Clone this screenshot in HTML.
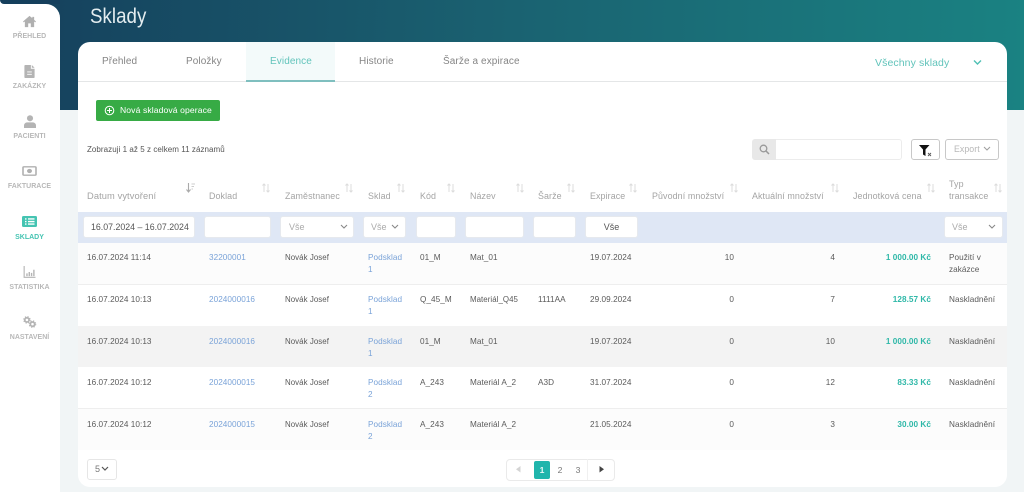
<!DOCTYPE html>
<html lang="cs">
<head>
<meta charset="utf-8">
<title>Sklady</title>
<style>
html,body{margin:0;padding:0;width:1024px;height:492px;overflow:hidden;background:#f1f5f6;font-family:"Liberation Sans",sans-serif}
#root{position:relative;width:1024px;height:492px;overflow:hidden;filter:blur(.3px)}
.a{position:absolute}
.t{position:absolute;white-space:nowrap;line-height:12px;font-size:8.2px;color:#5a5a5a;letter-spacing:.05px}
.r{text-align:right}
.l{color:#7aa3d8}
.h{color:#a4a4a4;font-size:8.9px;letter-spacing:.1px}
.g{color:#2fb8a8;font-weight:bold}
.n{position:absolute;left:0;width:59px;text-align:center;font-size:7px;font-weight:bold;color:#b8b8b8;line-height:10px;white-space:nowrap}
.tab{position:absolute;top:55px;font-size:10px;line-height:14px;color:#858585;white-space:nowrap;letter-spacing:.1px}
.i{position:absolute;top:216px;height:20px;background:#fff;border:1px solid #e6e9ee;border-radius:3px;box-sizing:content-box}
.sel{font-size:9px;line-height:20px;color:#aaa;white-space:nowrap}
.row{position:absolute;left:78px;width:929px}
svg{position:absolute;display:block}
</style>
</head>
<body>
<div id="root">
<div class="a" style="left:0;top:0;width:1024px;height:110px;background:linear-gradient(92deg,#153f5c 0%,#1a6271 50%,#1a8282 100%)"></div>
<div class="a" style="left:0;top:0;width:8px;height:8px;background:#fff"></div>
<div class="a" style="left:0;top:0;width:60px;height:4px;background:#153f5c;border-bottom-left-radius:5px"></div>
<div class="a" style="left:0;top:4px;width:60px;height:488px;background:#fff;border-radius:0 14px 0 0"></div>

<svg style="left:22px;top:15px" width="15" height="13" viewBox="0 0 15 14"><path d="M7.500 1 0.500 7l.8 1L2.500 7v6h3.600V9h2.800v4h3.600V7l1.200 1 .8-1-2-1.800V2h-2v1.400z" fill="#b0b0b0"/></svg>
<div class="n" style="top:32px">PŘEHLED</div>
<svg style="left:24px;top:65px" width="11" height="13" viewBox="0 0 11 14"><path d="M1 0h6v4h4v9a1 1 0 0 1-1 1H1a1 1 0 0 1-1-1V1a1 1 0 0 1 1-1zM8 0l3 3H8zM3 7v1h5V7zm0 2.500v1h5v-1z" fill="#b4b4b4" fill-rule="evenodd"/></svg>
<div class="n" style="top:82px">ZAKÁZKY</div>
<svg style="left:24px;top:115px" width="12" height="13" viewBox="0 0 13 14"><circle cx="6.500" cy="3.500" r="3.300" fill="#b4b4b4"/><path d="M0 14v-2.500C0 9 2 8 4 8h5c2 0 4 1 4 3.500V14z" fill="#b4b4b4"/></svg>
<div class="n" style="top:132px">PACIENTI</div>
<svg style="left:22px;top:166px" width="15" height="10" viewBox="0 0 15 12" preserveAspectRatio="none"><rect x="1" y="1" width="13" height="10" rx="1" fill="none" stroke="#b0b0b0" stroke-width="1.600"/><circle cx="7.500" cy="6" r="2.500" fill="#b0b0b0"/></svg>
<div class="n" style="top:182px">FAKTURACE</div>
<svg style="left:22px;top:216px" width="15" height="11" viewBox="0 0 15 12" preserveAspectRatio="none"><rect width="15" height="12" rx="1.500" fill="#45c4b2"/><path d="M3 2.500h1.500v1.500H3zM6 2.500h6.500v1.500H6zM3 5.300h1.500v1.500H3zM6 5.300h6.500v1.500H6zM3 8h1.500v1.500H3zM6 8h6.500v1.500H6z" fill="#fff"/></svg>
<div class="n" style="top:233px;color:#45c4b2">SKLADY</div>
<svg style="left:23px;top:266px" width="13" height="12" viewBox="0 0 13 13"><path d="M.7 0v12.300H13" fill="none" stroke="#b4b4b4" stroke-width="1.200"/><path d="M3 8h1.500v3H3zM5.500 6.500H7V11H5.500zM8 7.500h1.500V11H8zM10.500 4H12v7h-1.500z" fill="#b4b4b4"/></svg>
<div class="n" style="top:283px">STATISTIKA</div>
<svg style="left:22px;top:316px" width="15" height="12" viewBox="0 0 16 14"><circle cx="5" cy="4.500" r="2.500" fill="none" stroke="#b4b4b4" stroke-width="2"/><circle cx="5" cy="4.500" r="3.800" fill="none" stroke="#b4b4b4" stroke-width="1.200" stroke-dasharray="1.500 1.500"/><circle cx="11.500" cy="9.500" r="2.500" fill="none" stroke="#b4b4b4" stroke-width="2"/><circle cx="11.500" cy="9.500" r="3.800" fill="none" stroke="#b4b4b4" stroke-width="1.200" stroke-dasharray="1.500 1.500"/></svg>
<div class="n" style="top:333px">NASTAVENÍ</div>

<div class="t" style="left:90px;top:2px;font-size:21.500px;line-height:28px;color:#e4edf0;transform:scaleX(.87);transform-origin:0 0">Sklady</div>

<div class="a" style="left:78px;top:42px;width:929px;height:445px;background:#fff;border-radius:12px;overflow:hidden">
  <div class="a" style="left:0;top:39px;width:929px;height:1px;background:#e4e6e7"></div>
  <div class="a" style="left:168px;top:0;width:89px;height:38px;background:#f3fafa;border-bottom:2px solid #7fbfbf"></div>
</div>
<div class="tab" style="left:102px">Přehled</div>
<div class="tab" style="left:186px">Položky</div>
<div class="tab" style="left:270px;color:#62c4bb">Evidence</div>
<div class="tab" style="left:359px">Historie</div>
<div class="tab" style="left:443px">Šarže a expirace</div>
<div class="tab" style="left:875px;top:56px;color:#62c4bb;font-size:10.500px">Všechny sklady</div>
<svg style="left:973px;top:59px" width="9" height="7" viewBox="0 0 9 7"><path d="M1 1.500l3.500 3.500L8 1.500" fill="none" stroke="#4fc0b4" stroke-width="1.400"/></svg>

<div class="a" style="left:96px;top:100px;width:124px;height:21px;background:#37ab45;border-radius:2px"></div>
<svg style="left:104px;top:105px" width="11" height="11" viewBox="0 0 11 11"><circle cx="5.500" cy="5.500" r="4.300" fill="none" stroke="#fff" stroke-width="1"/><path d="M5.500 3v5M3 5.500h5" stroke="#fff" stroke-width="1"/></svg>
<div class="t" style="left:120px;top:104px;color:#fff;font-size:8.600px;letter-spacing:.1px">Nová skladová operace</div>

<div class="t" style="left:87px;top:144px;color:#555;font-size:8px">Zobrazuji 1 až 5 z celkem 11 záznamů</div>

<div class="a" style="left:752px;top:139px;width:24px;height:21px;background:#e8e8e8;border-radius:3px 0 0 3px"></div>
<div class="a" style="left:776px;top:139px;width:125px;height:19px;background:#fff;border:1px solid #ececec;border-left:0;border-radius:0 3px 3px 0"></div>
<svg style="left:759px;top:144px" width="11" height="11" viewBox="0 0 11 11"><circle cx="4.500" cy="4.500" r="3.300" fill="none" stroke="#999" stroke-width="1.300"/><path d="M7 7l3 3" stroke="#999" stroke-width="1.500"/></svg>
<div class="a" style="left:911px;top:139px;width:27px;height:19px;background:#fff;border:1px solid #c8c8c8;border-radius:3px"></div>
<svg style="left:919px;top:145px" width="15" height="12" viewBox="0 0 15 12"><path d="M0 0h10.500L6.500 4.500V11L4 9.500V4.500z" fill="#111"/><path d="M9 8l3 3M12 8l-3 3" stroke="#555" stroke-width=".9"/></svg>
<div class="a" style="left:945px;top:139px;width:52px;height:19px;background:#fff;border:1px solid #c8c8c8;border-radius:3px"></div>
<div class="t" style="left:954px;top:143px;font-size:8.800px;color:#b8b8b8">Export</div>
<svg style="left:983px;top:146px" width="8" height="6" viewBox="0 0 8 6"><path d="M1 1l3 3 3-3" fill="none" stroke="#a0a0a0" stroke-width="1.100"/></svg>

<div class="row" style="top:212px;height:31px;background:#dfe7f5"></div>
<div class="row" style="top:243px;height:41px;background:#fcfcfc;border-bottom:1px solid #eee"></div>
<div class="row" style="top:285px;height:41px;background:#fff"></div>
<div class="row" style="top:326px;height:41px;background:#f3f3f3"></div>
<div class="row" style="top:367px;height:41px;background:#fff;border-bottom:1px solid #eee"></div>
<div class="row" style="top:409px;height:41px;background:#fcfcfc"></div>

<div class="t h" style="left:87px;top:190px;font-size:9.300px">Datum vytvoření</div>
<div class="t h" style="left:209px;top:190px">Doklad</div>
<div class="t h" style="left:285px;top:190px">Zaměstnanec</div>
<div class="t h" style="left:368px;top:190px">Sklad</div>
<div class="t h" style="left:420px;top:190px">Kód</div>
<div class="t h" style="left:470px;top:190px">Název</div>
<div class="t h" style="left:538px;top:190px">Šarže</div>
<div class="t h" style="left:590px;top:190px">Expirace</div>
<div class="t h" style="left:652px;top:190px">Původní množství</div>
<div class="t h" style="left:752px;top:190px">Aktuální množství</div>
<div class="t h" style="left:853px;top:190px">Jednotková cena</div>
<div class="t h" style="left:949px;top:178px">Typ</div>
<div class="t h" style="left:949px;top:190px">transakce</div>

<svg style="left:186px;top:183px" width="9" height="10" viewBox="0 0 9 10"><path d="M2.500 0v8M.5 6.500l2 2.500 2-2.500" fill="none" stroke="#aaa" stroke-width="1.100"/><path d="M5.500 1H9M5.500 3.500H8M5.500 6H7" stroke="#ccc" stroke-width="1"/></svg>
<svg style="left:262px;top:183px" width="8" height="10" viewBox="0 0 8 10"><path d="M2 9V1M.5 2.500 2 1l1.500 1.500M6 1v8M4.500 7.500 6 9l1.500-1.500" fill="none" stroke="#dcdcdc" stroke-width="1"/></svg>
<svg style="left:345px;top:183px" width="8" height="10" viewBox="0 0 8 10"><path d="M2 9V1M.5 2.500 2 1l1.500 1.500M6 1v8M4.500 7.500 6 9l1.500-1.500" fill="none" stroke="#dcdcdc" stroke-width="1"/></svg>
<svg style="left:397px;top:183px" width="8" height="10" viewBox="0 0 8 10"><path d="M2 9V1M.5 2.500 2 1l1.500 1.500M6 1v8M4.500 7.500 6 9l1.500-1.500" fill="none" stroke="#dcdcdc" stroke-width="1"/></svg>
<svg style="left:447px;top:183px" width="8" height="10" viewBox="0 0 8 10"><path d="M2 9V1M.5 2.500 2 1l1.500 1.500M6 1v8M4.500 7.500 6 9l1.500-1.500" fill="none" stroke="#dcdcdc" stroke-width="1"/></svg>
<svg style="left:516px;top:183px" width="8" height="10" viewBox="0 0 8 10"><path d="M2 9V1M.5 2.500 2 1l1.500 1.500M6 1v8M4.500 7.500 6 9l1.500-1.500" fill="none" stroke="#dcdcdc" stroke-width="1"/></svg>
<svg style="left:567px;top:183px" width="8" height="10" viewBox="0 0 8 10"><path d="M2 9V1M.5 2.500 2 1l1.500 1.500M6 1v8M4.500 7.500 6 9l1.500-1.500" fill="none" stroke="#dcdcdc" stroke-width="1"/></svg>
<svg style="left:629px;top:183px" width="8" height="10" viewBox="0 0 8 10"><path d="M2 9V1M.5 2.500 2 1l1.500 1.500M6 1v8M4.500 7.500 6 9l1.500-1.500" fill="none" stroke="#dcdcdc" stroke-width="1"/></svg>
<svg style="left:730px;top:183px" width="8" height="10" viewBox="0 0 8 10"><path d="M2 9V1M.5 2.500 2 1l1.500 1.500M6 1v8M4.500 7.500 6 9l1.500-1.500" fill="none" stroke="#dcdcdc" stroke-width="1"/></svg>
<svg style="left:831px;top:183px" width="8" height="10" viewBox="0 0 8 10"><path d="M2 9V1M.5 2.500 2 1l1.500 1.500M6 1v8M4.500 7.500 6 9l1.500-1.500" fill="none" stroke="#dcdcdc" stroke-width="1"/></svg>
<svg style="left:927px;top:183px" width="8" height="10" viewBox="0 0 8 10"><path d="M2 9V1M.5 2.500 2 1l1.500 1.500M6 1v8M4.500 7.500 6 9l1.500-1.500" fill="none" stroke="#dcdcdc" stroke-width="1"/></svg>
<svg style="left:994px;top:183px" width="8" height="10" viewBox="0 0 8 10"><path d="M2 9V1M.5 2.500 2 1l1.500 1.500M6 1v8M4.500 7.500 6 9l1.500-1.500" fill="none" stroke="#dcdcdc" stroke-width="1"/></svg>

<div class="i sel" style="left:83px;width:110px;color:#555;font-size:8.800px;text-indent:7px">16.07.2024 – 16.07.2024</div>
<div class="i" style="left:204px;width:65px"></div>
<div class="i sel" style="left:280px;width:72px;text-indent:8px">Vše</div>
<svg style="left:340px;top:224px" width="8" height="6" viewBox="0 0 8 6"><path d="M1 1l3 3 3-3" fill="none" stroke="#888" stroke-width="1.100"/></svg>
<div class="i sel" style="left:363px;width:41px;text-indent:7px">Vše</div>
<svg style="left:391px;top:224px" width="8" height="6" viewBox="0 0 8 6"><path d="M1 1l3 3 3-3" fill="none" stroke="#888" stroke-width="1.100"/></svg>
<div class="i" style="left:416px;width:38px"></div>
<div class="i" style="left:465px;width:57px"></div>
<div class="i" style="left:533px;width:41px"></div>
<div class="i sel" style="left:585px;width:51px;text-align:center;color:#555">Vše</div>
<div class="i sel" style="left:944px;width:57px;text-indent:7px">Vše</div>
<svg style="left:988px;top:224px" width="8" height="6" viewBox="0 0 8 6"><path d="M1 1l3 3 3-3" fill="none" stroke="#888" stroke-width="1.100"/></svg>

<div class="t" style="left:87px;top:252px">16.07.2024 11:14</div>
<div class="t l" style="left:209px;top:252px">32200001</div>
<div class="t" style="left:285px;top:252px;font-size:7.900px">Novák Josef</div>
<div class="t l" style="left:368px;top:252px">Podsklad</div>
<div class="t l" style="left:368px;top:264px">1</div>
<div class="t" style="left:420px;top:252px">01_M</div>
<div class="t" style="left:470px;top:252px">Mat_01</div>
<div class="t" style="left:590px;top:252px">19.07.2024</div>
<div class="t r" style="left:684px;width:50px;top:252px">10</div>
<div class="t r" style="left:785px;width:50px;top:252px">4</div>
<div class="t r g" style="left:861px;width:70px;top:252px">1 000.00 Kč</div>
<div class="t" style="left:949px;top:252px">Použití v</div>
<div class="t" style="left:949px;top:264px">zakázce</div>

<div class="t" style="left:87px;top:294px">16.07.2024 10:13</div>
<div class="t l" style="left:209px;top:294px">2024000016</div>
<div class="t" style="left:285px;top:294px;font-size:7.900px">Novák Josef</div>
<div class="t l" style="left:368px;top:294px">Podsklad</div>
<div class="t l" style="left:368px;top:306px">1</div>
<div class="t" style="left:420px;top:294px">Q_45_M</div>
<div class="t" style="left:470px;top:294px;font-size:7.900px">Materiál_Q45</div>
<div class="t" style="left:538px;top:294px">1111AA</div>
<div class="t" style="left:590px;top:294px">29.09.2024</div>
<div class="t r" style="left:684px;width:50px;top:294px">0</div>
<div class="t r" style="left:785px;width:50px;top:294px">7</div>
<div class="t r g" style="left:861px;width:70px;top:294px">128.57 Kč</div>
<div class="t" style="left:949px;top:294px">Naskladnění</div>

<div class="t" style="left:87px;top:336px">16.07.2024 10:13</div>
<div class="t l" style="left:209px;top:336px">2024000016</div>
<div class="t" style="left:285px;top:336px;font-size:7.900px">Novák Josef</div>
<div class="t l" style="left:368px;top:336px">Podsklad</div>
<div class="t l" style="left:368px;top:348px">1</div>
<div class="t" style="left:420px;top:336px">01_M</div>
<div class="t" style="left:470px;top:336px">Mat_01</div>
<div class="t" style="left:590px;top:336px">19.07.2024</div>
<div class="t r" style="left:684px;width:50px;top:336px">0</div>
<div class="t r" style="left:785px;width:50px;top:336px">10</div>
<div class="t r g" style="left:861px;width:70px;top:336px">1 000.00 Kč</div>
<div class="t" style="left:949px;top:336px">Naskladnění</div>

<div class="t" style="left:87px;top:377px">16.07.2024 10:12</div>
<div class="t l" style="left:209px;top:377px">2024000015</div>
<div class="t" style="left:285px;top:377px;font-size:7.900px">Novák Josef</div>
<div class="t l" style="left:368px;top:377px">Podsklad</div>
<div class="t l" style="left:368px;top:389px">2</div>
<div class="t" style="left:420px;top:377px">A_243</div>
<div class="t" style="left:470px;top:377px">Materiál A_2</div>
<div class="t" style="left:538px;top:377px">A3D</div>
<div class="t" style="left:590px;top:377px">31.07.2024</div>
<div class="t r" style="left:684px;width:50px;top:377px">0</div>
<div class="t r" style="left:785px;width:50px;top:377px">12</div>
<div class="t r g" style="left:861px;width:70px;top:377px">83.33 Kč</div>
<div class="t" style="left:949px;top:377px">Naskladnění</div>

<div class="t" style="left:87px;top:419px">16.07.2024 10:12</div>
<div class="t l" style="left:209px;top:419px">2024000015</div>
<div class="t" style="left:285px;top:419px;font-size:7.900px">Novák Josef</div>
<div class="t l" style="left:368px;top:419px">Podsklad</div>
<div class="t l" style="left:368px;top:431px">2</div>
<div class="t" style="left:420px;top:419px">A_243</div>
<div class="t" style="left:470px;top:419px">Materiál A_2</div>
<div class="t" style="left:590px;top:419px">21.05.2024</div>
<div class="t r" style="left:684px;width:50px;top:419px">0</div>
<div class="t r" style="left:785px;width:50px;top:419px">3</div>
<div class="t r g" style="left:861px;width:70px;top:419px">30.00 Kč</div>
<div class="t" style="left:949px;top:419px">Naskladnění</div>

<div class="a" style="left:87px;top:459px;width:28px;height:19px;background:#fff;border:1px solid #e6e6e6;border-radius:3px"></div>
<div class="t" style="left:95px;top:463px;font-size:9px;color:#777">5</div>
<svg style="left:101px;top:466px" width="8" height="6" viewBox="0 0 8 6"><path d="M1 1l3 3 3-3" fill="none" stroke="#555" stroke-width="1.200"/></svg>

<div class="a" style="left:506px;top:459px;width:107px;height:20px;background:#fff;border:1px solid #eaeaea;border-radius:4px"></div>
<div class="a" style="left:587px;top:459px;width:1px;height:21px;background:#f0f0f0"></div>
<div class="a" style="left:534px;top:461px;width:16px;height:18px;background:#20b5ac;border-radius:2px"></div>
<svg style="left:516px;top:466px" width="5" height="7" viewBox="0 0 5 7"><path d="M4.500 0v6.500L0 3.200z" fill="#d4d4d4"/></svg>
<div class="t" style="left:534px;width:16px;text-align:center;top:464px;color:#e8f8f6;font-size:8.600px;font-weight:bold">1</div>
<div class="t" style="left:552px;width:16px;text-align:center;top:464px;color:#777;font-size:8.600px">2</div>
<div class="t" style="left:570px;width:16px;text-align:center;top:464px;color:#777;font-size:8.600px">3</div>
<svg style="left:599px;top:466px" width="5" height="7" viewBox="0 0 5 7"><path d="M.5 0v6.500L5 3.200z" fill="#444"/></svg>
</div>
</body>
</html>
